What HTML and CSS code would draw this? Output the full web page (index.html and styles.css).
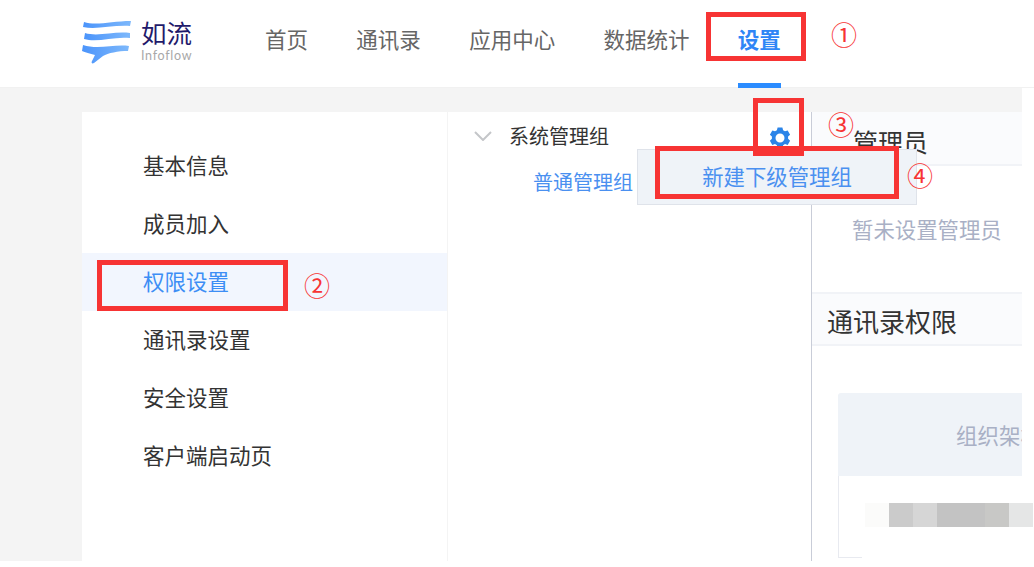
FILE: index.html
```html
<!DOCTYPE html>
<html lang="zh-CN">
<head>
  <meta charset="UTF-8" />
  <meta name="viewport" content="width=device-width, initial-scale=1.0" />
  <title>如流 设置</title>
  <link rel="stylesheet" href="styles.css">
</head>
<body>

  <div class="page">
    <!-- Top bar -->
    <header class="topbar">
      <div class="logo">
        <svg class="logo-icon" width="50" height="44" viewBox="0 0 50 44">
          <defs>
            <linearGradient id="logoBlue" x1="0" y1="0" x2="1" y2="0">
              <stop offset="0" stop-color="#4b94fb" />
              <stop offset="1" stop-color="#7db8fb" />
            </linearGradient>
          </defs>
          <path d="M2 2 C14 6 30 1 49 1 L48 6 C30 5 14 10 1 7 Z" fill="url(#logoBlue)" />
          <path d="M3 13 C16 17 32 11 48 13 L48 18 C32 16 16 23 2 19 Z" fill="url(#logoBlue)" />
          <path d="M1 25 C16 30 32 24 47 26 L46 31 C36 31 26 33 21 36 L12 43 C10 44 9 43 10 41 L13 35 C8 34 3 32 0 31 Z" fill="url(#logoBlue)" />
        </svg>
        <div class="logo-text">
          <div class="logo-name">如流</div>
          <div class="logo-sub">Infoflow</div>
        </div>
      </div>
      <nav class="nav">
        <a>首页</a>
        <a>通讯录</a>
        <a>应用中心</a>
        <a>数据统计</a>
        <a class="active">设置</a>
      </nav>
    </header>

    <div class="main">
      <!-- Left menu -->
      <aside class="sidebar">
        <a>基本信息</a>
        <a>成员加入</a>
        <a class="active">权限设置</a>
        <a>通讯录设置</a>
        <a>安全设置</a>
        <a>客户端启动页</a>
      </aside>

      <!-- Group tree -->
      <section class="tree">
        <div class="tree-root">
          <svg class="chevron" width="18" height="10" viewBox="0 0 18 10">
            <path d="M1 1 L9 9 L17 1" fill="none" stroke="#c4c6c9" stroke-width="2" />
          </svg>
          <span>系统管理组</span>
          <svg class="gear" width="24" height="24" viewBox="0 0 24 24">
            <path fill-rule="evenodd" fill="#2b84e8" d="M9.6 1.500h4.800l.7 2.700 1.900 1.100 2.700-.8 2.400 4.200-2 1.900v2.200l2 1.900-2.400 4.200-2.700-.8-1.900 1.100-.7 2.700H9.600l-.7-2.700-1.900-1.100-2.700.8-2.400-4.200 2-1.900v-2.200l-2-1.900 2.400-4.200 2.700.8 1.900-1.100zM12 7.500a4.500 4.500 0 1 0 0 9 4.500 4.500 0 0 0 0-9z" />
          </svg>
        </div>
        <div class="tree-child">普通管理组</div>
        <div class="dropdown">新建下级管理组</div>
      </section>

      <!-- Right detail -->
      <section class="detail">
        <h3 class="detail-title">管理员</h3>
        <div class="empty">暂未设置管理员</div>
        <h3 class="detail-title big">通讯录权限</h3>
        <div class="table">
          <div class="table-head">组织架构</div>
          <div class="table-body"></div>
        </div>
      </section>
    </div>

    <!-- Screenshot annotations -->
    <div class="mark mark-1"></div>
    <div class="mark mark-2"></div>
    <div class="mark mark-3"></div>
    <div class="mark mark-4"></div>
    <span class="num num-1">①</span>
    <span class="num num-2">②</span>
    <span class="num num-3">③</span>
    <span class="num num-4">④</span>

    <!-- Blurred out part -->
    <div class="blur">
      <div class="mosaic">
        <i class="m1"></i><i class="m2"></i><i class="m3"></i><i class="m4"></i><i class="m4"></i><i class="m5"></i><i class="m6"></i>
      </div>
    </div>
  </div>

</body>
</html>
```

FILE: styles.css
```css
body {
  margin: 0;
  background: white;
  font-family: "Noto Sans CJK SC", "Noto Sans", sans-serif;
  overflow: hidden;
}

.page {
  position: relative;
  width: 1034px;
  height: 567px;
  overflow: hidden;
}

/* Top bar */
.topbar {
  display: flex;
  align-items: stretch;
  height: 88px;
  padding-left: 82px;
  background: white;
  box-sizing: border-box;
  border-bottom: 1px solid #f1f1f1;
}

.logo {
  display: flex;
  align-items: flex-start;
  width: 183px;
  padding-top: 19px;
}

.logo-icon {
  margin-right: 9px;
  margin-top: 1px;
}

.logo-name {
  font-size: 25.5px;
  line-height: 26px;
  color: #1f1a6b;
}

.logo-sub {
  margin-top: 3px;
  font-family: "Lato", sans-serif;
  font-size: 12.5px;
  line-height: 16px;
  letter-spacing: 0.7px;
  color: #a8a8a8;
}

.nav {
  display: flex;
  gap: 48.3px;
}

.nav a {
  font-size: 21.5px;
  line-height: 78px;
  color: #666;
}

.nav a.active {
  color: #2f86f6;
  font-weight: bold;
  border-bottom: 5px solid #2b8cff;
  height: 83px;
}

/* Main area */
.main {
  display: flex;
  width: 1022px;
  height: 473px;
  padding: 24px 0 0 82px;
  box-sizing: border-box;
  background: #f4f4f4;
}

.sidebar {
  width: 365px;
  padding-top: 25px;
  background: white;
}

.sidebar a {
  display: block;
  height: 58px;
  padding-left: 61px;
  font-size: 21.5px;
  line-height: 56px;
  color: #333;
}

.sidebar a.active {
  color: #3d8ef5;
  background: #f2f6fe;
}

.tree {
  position: relative;
  width: 364px;
  margin-left: 1px;
  background: white;
  border-right: 1px solid #c9cdd8;
  box-sizing: border-box;
}

.tree-root {
  display: flex;
  align-items: center;
  height: 47px;
  padding-left: 26px;
  font-size: 20px;
  color: #333;
}

.chevron {
  margin-right: 17px;
}

.gear {
  margin-left: auto;
  margin-right: 19px;
  margin-top: 5px;
}

.tree-child {
  margin-top: 1px;
  padding-left: 85px;
  font-size: 20px;
  line-height: 44px;
  color: #4a90f0;
}

.dropdown {
  position: absolute;
  top: 37px;
  left: 189px;
  width: 280px;
  height: 56px;
  box-sizing: border-box;
  border: 1px solid #dfe3ea;
  background: #eff3f8;
  font-size: 21.4px;
  line-height: 52px;
  text-align: center;
  color: #4a90f0;
}

.detail {
  flex: 1;
  min-width: 0;
  overflow: hidden;
  background: white;
}

.detail-title {
  height: 54px;
  margin: 0;
  padding-left: 41px;
  background: #fafbfd;
  border-bottom: 2px solid #f1f3f7;
  box-sizing: border-box;
  font-size: 25px;
  font-weight: normal;
  line-height: 58px;
  color: #333;
}

.detail-title.big {
  padding-left: 15px;
  border-top: 2px solid #f1f3f7;
  font-size: 26px;
  line-height: 54px;
}

.empty {
  height: 126px;
  padding-left: 40px;
  font-size: 21.4px;
  line-height: 126px;
  color: #a9b0c5;
}

.table {
  margin: 47px 0 0 26px;
}

.table-head {
  height: 83px;
  padding-left: 118px;
  background: #eff3f8;
  border-radius: 3px 0 0 0;
  font-size: 21.5px;
  line-height: 84px;
  white-space: nowrap;
  color: #a9b0c5;
}

.table-body {
  height: 82px;
  box-sizing: border-box;
  border-left: 1px solid #e8eaf0;
  border-bottom: 1px solid #e8eaf0;
}

/* Red annotation boxes */
.mark {
  position: absolute;
  box-sizing: border-box;
  border: 5px solid #f73434;
}

.mark-1 { left: 706px; top: 12px; width: 100px; height: 49px; }
.mark-2 { left: 97px; top: 260px; width: 191px; height: 51px; }
.mark-3 { left: 753px; top: 98px; width: 51px; height: 58px; }
.mark-4 { left: 655px; top: 146px; width: 244px; height: 53px; }

.num {
  position: absolute;
  font-size: 26px;
  line-height: 30px;
  color: #f73434;
}

.num-1 { left: 831px; top: 19px; }
.num-2 { left: 304px; top: 270px; }
.num-3 { left: 828px; top: 109px; }
.num-4 { left: 907px; top: 160px; }

/* Blurred corner */
.blur {
  position: absolute;
  left: 862px;
  top: 478px;
  width: 172px;
  height: 89px;
  background: white;
  border-radius: 6px 0 0 0;
}

.mosaic {
  display: flex;
  margin: 25px 0 0 3px;
}

.mosaic i {
  width: 24px;
  height: 24px;
}

.m1 { background: #fbfbfa; }
.m2 { background: #cbcbcb; }
.m3 { background: #d6d6d6; }
.m4 { background: #c3c3c3; }
.m5 { background: #c8c8c6; }
.m6 { background: #e5e6e6; }
```
